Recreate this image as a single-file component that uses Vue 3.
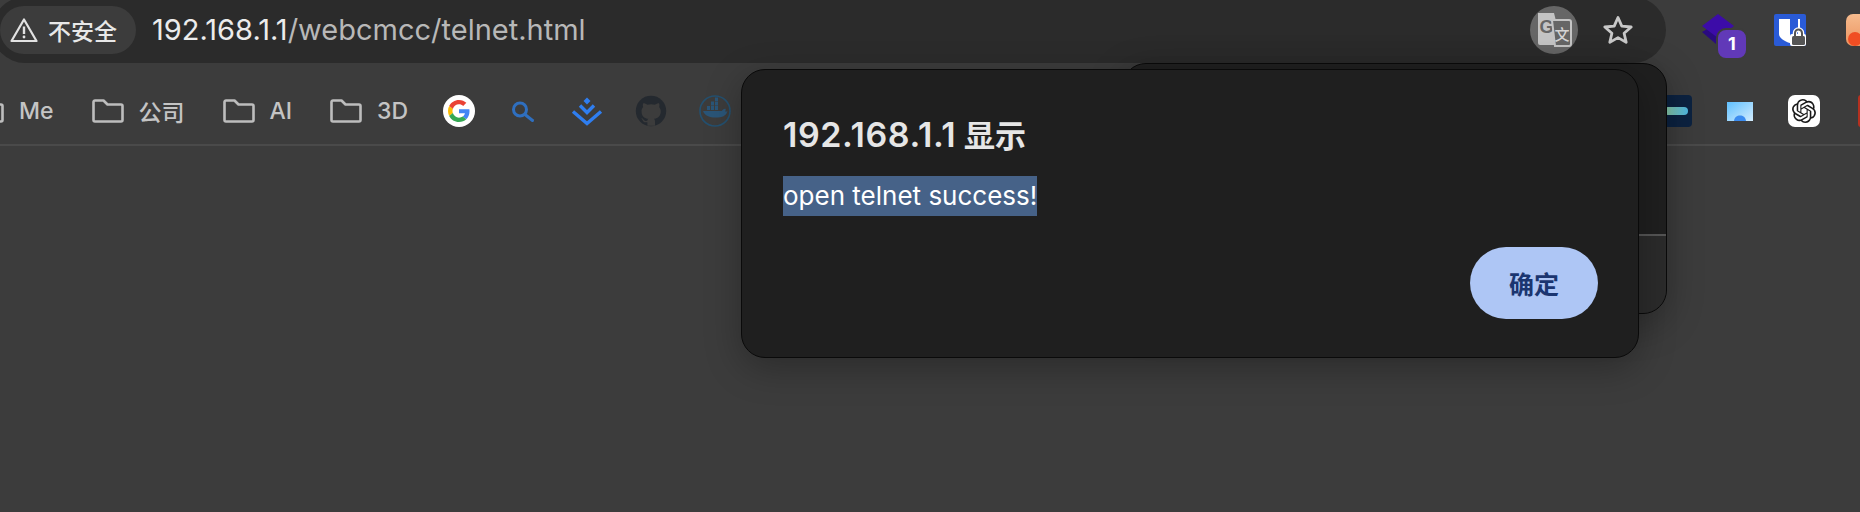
<script setup>
const bookmarks = ['Me', '公司', 'AI', '3D']
</script>

<template>
  <div class="window">
    <header class="toolbar">
      <div class="omnibox">
        <div class="chip">
          <svg class="warn" viewBox="0 0 28 26" width="28" height="26" fill="none">
            <path d="M14 2.500 26.500 24h-25Z" stroke="#e2e2e2" stroke-width="2.200" stroke-linejoin="round" />
            <path d="M14 9.500v7.500" stroke="#e2e2e2" stroke-width="2.400" />
            <circle cx="14" cy="20" r="1.400" fill="#e2e2e2" />
          </svg>
          <span>不安全</span>
        </div>
        <div class="url"><span class="host">192.168.1.1</span>/webcmcc/telnet.html</div>
        <div class="omni-actions">
          <div class="translate">
            <svg viewBox="0 0 36 36" width="36" height="36">
              <path d="M2 1h16l8 32H4a2 2 0 0 1-2-2Z" fill="#c4c4c4" />
              <text x="3.500" y="21" class="g-letter">G</text>
              <path d="M16 8h17a2 2 0 0 1 2 2v22a2 2 0 0 1-2 2H19Z" fill="#666" stroke="#c4c4c4" stroke-width="2" />
              <text x="18.500" y="28" class="zh-letter">文</text>
            </svg>
          </div>
          <svg class="star" viewBox="0 0 32 32" width="32" height="32" fill="none">
            <path d="M16 3.500l3.800 8.600 9.400.9-7.100 6.200 2.100 9.200L16 23.600l-8.200 4.800 2.100-9.200L2.800 13l9.400-.9Z" stroke="#c8c8c8" stroke-width="2.800" stroke-linejoin="round" />
          </svg>
        </div>
      </div>
      <div class="extensions">
        <div class="ext">
          <svg viewBox="0 0 32 32" width="32" height="32">
            <path d="M0 18 14 10l14 8-14 12Z" fill="#2a0a80" />
            <path d="M16 0 32 12 16 24 0 12Z" fill="#3c0ca8" />
          </svg>
          <span class="badge">1</span>
        </div>
        <div class="ext">
          <svg viewBox="0 0 32 32" width="32" height="32">
            <rect width="32" height="32" rx="2" fill="#2a5bd7" />
            <path d="M5 5h21v15c0 4-5 7-10.500 9C10 27 5 24 5 20Z" fill="#fff" />
            <path d="M16 5h8v15c0 2-3 4-8 6Z" fill="#2a5bd7" />
            <rect x="16" y="20" width="16" height="12" rx="2" fill="#fff" />
            <path d="M21 22v-3a3.500 3.500 0 0 1 7 0v3" fill="none" stroke="#fff" stroke-width="4.500" />
            <path d="M21 22v-3a3.500 3.500 0 0 1 7 0v3" fill="none" stroke="#555" stroke-width="2" />
            <rect x="18" y="22" width="13" height="9" rx="1.500" fill="#555" />
          </svg>
        </div>
        <div class="ext">
          <svg viewBox="0 0 32 32" width="32" height="32">
            <defs>
              <linearGradient id="peach" x1="0" y1="0" x2="0" y2="1">
                <stop offset="0" stop-color="#f6bb8e" />
                <stop offset="1" stop-color="#ec9460" />
              </linearGradient>
            </defs>
            <rect width="32" height="32" rx="7" fill="url(#peach)" />
            <circle cx="9" cy="25" r="7" fill="#f04e23" />
          </svg>
        </div>
      </div>
    </header>

    <nav class="bookmarks">
      <div v-for="name in bookmarks" :key="name" class="bm">
        <svg class="folder" viewBox="0 0 32 24" width="32" height="24" fill="none">
          <path d="M3 1.500h8.500l4 4H29a1.500 1.500 0 0 1 1.500 1.500v14a1.500 1.500 0 0 1-1.500 1.500H3A1.500 1.500 0 0 1 1.500 21V3A1.500 1.500 0 0 1 3 1.500Z" stroke="#bdbdbd" stroke-width="2.600" stroke-linejoin="round" />
        </svg>
        <span>{{ name }}</span>
      </div>

      <div class="icons">
        <svg viewBox="0 0 32 32" width="32" height="32">
          <circle cx="16" cy="16" r="16" fill="#fff" />
          <g transform="translate(5 5) scale(.458)">
            <path fill="#EA4335" d="M24 9.5c3.54 0 6.71 1.22 9.21 3.6l6.85-6.85C35.9 2.38 30.47 0 24 0 14.62 0 6.51 5.38 2.56 13.22l7.98 6.19C12.43 13.72 17.74 9.5 24 9.5z" />
            <path fill="#4285F4" d="M46.98 24.55c0-1.57-.15-3.09-.38-4.55H24v9.02h12.94c-.58 2.96-2.26 5.48-4.78 7.18l7.73 6c4.51-4.18 7.09-10.36 7.09-17.65z" />
            <path fill="#FBBC05" d="M10.53 28.59c-.48-1.45-.76-2.99-.76-4.59s.27-3.14.76-4.59l-7.98-6.19C.92 16.46 0 20.12 0 24c0 3.88.92 7.54 2.56 10.78l7.97-6.19z" />
            <path fill="#34A853" d="M24 48c6.48 0 11.93-2.13 15.89-5.81l-7.73-6c-2.15 1.45-4.92 2.3-8.16 2.3-6.26 0-11.57-4.22-13.47-9.91l-7.98 6.19C6.51 42.62 14.62 48 24 48z" />
          </g>
        </svg>
        <svg viewBox="0 0 32 32" width="32" height="32" fill="none">
          <circle cx="13" cy="14.500" r="6.500" stroke="#2f6fbf" stroke-width="3" />
          <path d="M18 19.500l7.500 6" stroke="#2f6fbf" stroke-width="3" stroke-linecap="round" />
        </svg>
        <svg viewBox="0 0 32 32" width="32" height="32" fill="none">
          <path d="M16 2.500 19.500 6 16 9.500 12.500 6Z" fill="#2f7ef0" />
          <path d="M9 10.500l7 7 7-7" stroke="#2f7ef0" stroke-width="3.400" />
          <path d="M2 16.500l14 12 14-12" stroke="#2f7ef0" stroke-width="3.400" />
        </svg>
        <svg viewBox="0 0 24 24" width="32" height="32">
          <circle cx="12" cy="12" r="11.400" fill="#24292f" />
          <path fill="#3c3c3c" d="M9.300 23v-2.600c-2.400.5-3.200-.6-3.600-1.500-.2-.6-.6-1.100-1.100-1.400 1.100-.3 1.600.7 2 1.200.8 1 1.900.9 2.700.5.1-.6.3-1.100.7-1.400-2.500-.3-5.100-1.400-5.100-5.700 0-1.200.4-2.200 1.200-3.100-.1-.3-.5-1.400.1-2.800 0 0 .9-.3 3.100 1.100a10.800 10.800 0 0 1 5.600 0c2.200-1.400 3.100-1.100 3.100-1.100.6 1.400.2 2.500.1 2.800.8.900 1.200 1.900 1.200 3.100 0 4.300-2.600 5.400-5.100 5.700.5.400.8 1.100.8 2V23Z" />
        </svg>
        <svg viewBox="0 0 32 32" width="32" height="32">
          <circle cx="16" cy="16" r="15" fill="none" stroke="#24506f" stroke-width="1.600" />
          <path d="M4 16h19c.5-1.500 2-2.500 3.500-2.200.4 1 .2 2-.5 2.700 1 .2 2 0 2.500-.3-1 3-3 5.800-9.500 6.300-7 .5-13-1-15-6.500Z" fill="#2a5578" />
          <path d="M8 11h3v4H8Zm4 0h3v4h-3Zm4 0h3v4h-3Zm-4-4.500h3v4h-3Zm4 0h3v4h-3Zm0-4h3v3.500h-3Z" fill="#2a5578" />
        </svg>
      </div>

      <div class="icons right">
        <svg viewBox="0 0 32 32" width="32" height="32">
          <defs>
            <linearGradient id="bar" x1="0" y1="0" x2="1" y2="0">
              <stop offset="0" stop-color="#8cc9a0" />
              <stop offset="1" stop-color="#4eb6e0" />
            </linearGradient>
          </defs>
          <rect width="32" height="32" rx="4" fill="#0c2240" />
          <rect x="4" y="12" width="24" height="8" rx="4" fill="url(#bar)" />
        </svg>
        <svg viewBox="0 0 32 32" width="32" height="32">
          <defs>
            <linearGradient id="screen" x1="0" y1="0" x2="1" y2="1">
              <stop offset="0" stop-color="#5fc0ff" />
              <stop offset="1" stop-color="#d3ecfd" />
            </linearGradient>
          </defs>
          <rect x="3" y="7" width="26" height="19" fill="url(#screen)" />
          <path d="M10 26c.5-4 3-5.500 6-5.500s5.500 1.500 6 5.500Z" fill="#3b8cf0" />
        </svg>
        <svg viewBox="0 0 32 32" width="32" height="32">
          <rect width="32" height="32" rx="7" fill="#fff" />
          <g transform="translate(4 4)">
            <path fill="#1a1a1a" d="M22.2819 9.8211a5.9847 5.9847 0 0 0-.5157-4.9108 6.0462 6.0462 0 0 0-6.5098-2.9A6.0651 6.0651 0 0 0 4.9807 4.1818a5.9847 5.9847 0 0 0-3.9977 2.9 6.0462 6.0462 0 0 0 .7427 7.0966 5.98 5.98 0 0 0 .511 4.9107 6.051 6.051 0 0 0 6.5146 2.9001A5.9847 5.9847 0 0 0 13.2599 24a6.0557 6.0557 0 0 0 5.7718-4.2058 5.9894 5.9894 0 0 0 3.9977-2.9001 6.0557 6.0557 0 0 0-.7475-7.0729zm-9.022 12.6081a4.4755 4.4755 0 0 1-2.8764-1.0408l.1419-.0804 4.7783-2.7582a.7948.7948 0 0 0 .3927-.6813v-6.7369l2.02 1.1686a.071.071 0 0 1 .038.052v5.5826a4.504 4.504 0 0 1-4.4945 4.4944zm-9.6607-4.1254a4.4708 4.4708 0 0 1-.5346-3.0137l.142.0852 4.783 2.7582a.7712.7712 0 0 0 .7806 0l5.8428-3.3685v2.3324a.0804.0804 0 0 1-.0332.0615L9.74 19.9502a4.4992 4.4992 0 0 1-6.1408-1.6464zM2.3408 7.8956a4.485 4.485 0 0 1 2.3655-1.9728V11.6a.7664.7664 0 0 0 .3879.6765l5.8144 3.3543-2.0201 1.1685a.0757.0757 0 0 1-.071 0l-4.8303-2.7865A4.504 4.504 0 0 1 2.3408 7.872zm16.5963 3.8558L13.1038 8.364 15.1192 7.2a.0757.0757 0 0 1 .071 0l4.8303 2.7913a4.4944 4.4944 0 0 1-.6765 8.1042v-5.6772a.79.79 0 0 0-.407-.667zm2.0107-3.0231l-.142-.0852-4.7735-2.7818a.7759.7759 0 0 0-.7854 0L9.409 9.2297V6.8974a.0662.0662 0 0 1 .0284-.0615l4.8303-2.7866a4.4992 4.4992 0 0 1 6.6802 4.66zM8.3065 12.863l-2.02-1.1638a.0804.0804 0 0 1-.038-.0567V6.0742a4.4992 4.4992 0 0 1 7.3757-3.4537l-.142.0805L8.704 5.459a.7948.7948 0 0 0-.3927.6813zm1.0976-2.3654l2.602-1.4998 2.6069 1.4998v2.9994l-2.5974 1.4997-2.6067-1.4997Z" />
          </g>
        </svg>
        <svg viewBox="0 0 32 32" width="32" height="32">
          <rect x="6" y="0" width="26" height="32" rx="3" fill="#b5301f" />
        </svg>
      </div>
    </nav>

    <main class="content"></main>

    <div class="dialog back">
      <div class="back-body"></div>
      <div class="back-foot"></div>
    </div>

    <div class="dialog front" role="alertdialog">
      <h1 class="title"><span class="title-host">192.168.1.1</span> 显示</h1>
      <p class="message"><span class="selected">open telnet success!</span></p>
      <div class="actions">
        <button class="ok" type="button">确定</button>
      </div>
    </div>
  </div>
</template>

<style>
html, body { margin: 0; background: #3c3c3c; }
</style>

<style scoped>
.window {
  position: relative;
  width: 1860px;
  height: 512px;
  overflow: hidden;
  display: flex;
  flex-direction: column;
  background: #3c3c3c;
  font-family: Inter, "Noto Sans CJK SC", sans-serif;
}
.toolbar {
  flex: none;
  height: 63px;
  display: flex;
  align-items: flex-start;
}
.omnibox {
  flex: none;
  box-sizing: border-box;
  width: 1674px;
  height: 66px;
  margin: -3px 0 0 -8px;
  padding: 9px 32px 0 8px;
  border-radius: 33px;
  background: #2b2b2b;
  display: flex;
  align-items: flex-start;
}
.chip {
  flex: none;
  box-sizing: border-box;
  width: 136px;
  height: 48px;
  border-radius: 24px;
  background: #3c3c3c;
  padding-left: 10px;
  display: flex;
  align-items: center;
  gap: 10px;
  color: #e8e8e8;
  font-size: 23px;
  font-weight: 500;
}
.url {
  margin-left: 16px;
  height: 48px;
  line-height: 48px;
  font-size: 29px;
  color: #b8b8b8;
  white-space: nowrap;
}
.host { color: #ececec; }
.omni-actions {
  margin-left: auto;
  display: flex;
  align-items: center;
  gap: 24px;
  height: 48px;
}
.translate {
  width: 48px;
  height: 48px;
  border-radius: 50%;
  background: #666;
  display: flex;
  align-items: center;
  justify-content: center;
}
.g-letter {
  font: 700 18px "Liberation Sans", sans-serif;
  fill: #666;
}
.zh-letter {
  font: 500 15px "Noto Sans CJK SC", sans-serif;
  fill: #d4d4d4;
}
.extensions {
  flex: none;
  margin: 14px 0 0 36px;
  display: flex;
  gap: 40px;
}
.ext {
  position: relative;
  width: 32px;
  height: 32px;
  flex: none;
}
.ext svg { display: block; }
.badge {
  position: absolute;
  left: 14px;
  top: 14px;
  box-sizing: border-box;
  width: 32px;
  height: 32px;
  border: 2px solid #3c3c3c;
  border-radius: 10px;
  background: #6139b8;
  color: #fff;
  font: 700 18px/28px Inter, sans-serif;
  text-align: center;
}
.bookmarks {
  flex: none;
  box-sizing: border-box;
  height: 83px;
  padding-top: 14px;
  margin-left: -28px;
  width: 1888px;
  border-bottom: 2px solid #4a4a4a;
  display: flex;
  align-items: center;
  gap: 38px;
  color: #c4c4c4;
  font-size: 23px;
  font-weight: 450;
}
.bm {
  flex: none;
  display: flex;
  align-items: center;
  gap: 15px;
}
.folder { display: block; flex: none; }
.icons {
  flex: none;
  display: flex;
  gap: 32px;
  margin-left: -3px;
}
.icons svg { display: block; flex: none; }
.icons.right {
  margin-left: auto;
  margin-right: -24px;
}
.content {
  flex: 1;
  background: #3c3c3c;
}
.dialog {
  position: absolute;
  box-sizing: border-box;
  border: 1.5px solid #0a0a0a;
  border-radius: 24px;
  background: #1f1f1f;
  box-shadow: 0 10px 36px rgba(0, 0, 0, .28);
}
.back {
  left: 1122px;
  top: 63px;
  width: 545px;
  height: 251px;
  overflow: hidden;
  display: flex;
  flex-direction: column;
}
.back-body { flex: 1; }
.back-foot {
  flex: none;
  height: 77.5px;
  border-top: 2px solid #555;
  background: #2b2b2b;
}
.front {
  left: 741px;
  top: 69px;
  width: 898px;
  height: 289px;
  padding: 45px 40px 38.5px 41px;
  display: flex;
  flex-direction: column;
}
.title {
  margin: 0;
  font-size: 31px;
  font-weight: 600;
  line-height: 40px;
  color: #e6e6e6;
}
.title-host {
  font-size: 34px;
  letter-spacing: .6px;
}
.message {
  margin: 20px 0 0;
  line-height: 40px;
  font-size: 26px;
  color: #fff;
}
.selected {
  display: inline-block;
  background: #466288;
}
.actions {
  margin-top: auto;
  display: flex;
  justify-content: flex-end;
}
.ok {
  width: 128px;
  height: 72px;
  border: 0;
  border-radius: 36px;
  background: #aec6f5;
  color: #1b3570;
  font-family: Inter, "Noto Sans CJK SC", sans-serif;
  font-size: 25px;
  font-weight: 600;
}
</style>
